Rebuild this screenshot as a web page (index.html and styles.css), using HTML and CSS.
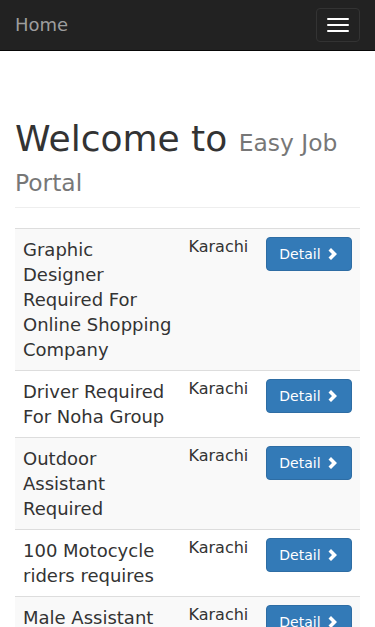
FILE: index.html
```html
<!DOCTYPE html>
<html lang="en">
<head>
    <meta charset="UTF-8">
    <meta name="viewport" content="width=device-width, initial-scale=1.0">
    <title>Easy Job Portal</title>
    <link rel="stylesheet" href="styles.css">
</head>
<body>
    <nav class="navbar">
        <a class="navbar-brand" href="#">Home</a>
        <button class="navbar-toggle" type="button">
            <span class="icon-bar"></span>
            <span class="icon-bar"></span>
            <span class="icon-bar"></span>
        </button>
    </nav>

    <div class="container">
        <div class="page-header">
            <h1>Welcome to <small>Easy Job Portal</small></h1>
        </div>

        <table class="jobs">
            <tbody>
                <tr>
                    <td class="title">Graphic Designer Required For Online Shopping Company</td>
                    <td class="city">Karachi</td>
                    <td><a class="btn" href="#">Detail <svg class="chevron" viewBox="0 0 14 14"><polygon points="3.5,3.5 6,1 12,7 6,13 3.5,10.5 7,7"/></svg></a></td>
                </tr>
                <tr>
                    <td class="title">Driver Required For Noha Group</td>
                    <td class="city">Karachi</td>
                    <td><a class="btn" href="#">Detail <svg class="chevron" viewBox="0 0 14 14"><polygon points="3.5,3.5 6,1 12,7 6,13 3.5,10.5 7,7"/></svg></a></td>
                </tr>
                <tr>
                    <td class="title">Outdoor Assistant Required</td>
                    <td class="city">Karachi</td>
                    <td><a class="btn" href="#">Detail <svg class="chevron" viewBox="0 0 14 14"><polygon points="3.5,3.5 6,1 12,7 6,13 3.5,10.5 7,7"/></svg></a></td>
                </tr>
                <tr>
                    <td class="title">100 Motocycle riders requires</td>
                    <td class="city">Karachi</td>
                    <td><a class="btn" href="#">Detail <svg class="chevron" viewBox="0 0 14 14"><polygon points="3.5,3.5 6,1 12,7 6,13 3.5,10.5 7,7"/></svg></a></td>
                </tr>
                <tr>
                    <td class="title">Male Assistant Required</td>
                    <td class="city">Karachi</td>
                    <td><a class="btn" href="#">Detail <svg class="chevron" viewBox="0 0 14 14"><polygon points="3.5,3.5 6,1 12,7 6,13 3.5,10.5 7,7"/></svg></a></td>
                </tr>
                <tr>
                    <td class="title">Sales Executive Required For Mobile Shop</td>
                    <td class="city">Karachi</td>
                    <td><a class="btn" href="#">Detail <svg class="chevron" viewBox="0 0 14 14"><polygon points="3.5,3.5 6,1 12,7 6,13 3.5,10.5 7,7"/></svg></a></td>
                </tr>
                <tr>
                    <td class="title">Office Boy Required</td>
                    <td class="city">Karachi</td>
                    <td><a class="btn" href="#">Detail <svg class="chevron" viewBox="0 0 14 14"><polygon points="3.5,3.5 6,1 12,7 6,13 3.5,10.5 7,7"/></svg></a></td>
                </tr>
                <tr>
                    <td class="title">Web Developer Required For Software House</td>
                    <td class="city">Karachi</td>
                    <td><a class="btn" href="#">Detail <svg class="chevron" viewBox="0 0 14 14"><polygon points="3.5,3.5 6,1 12,7 6,13 3.5,10.5 7,7"/></svg></a></td>
                </tr>
                <tr>
                    <td class="title">Female Receptionist Required</td>
                    <td class="city">Karachi</td>
                    <td><a class="btn" href="#">Detail <svg class="chevron" viewBox="0 0 14 14"><polygon points="3.5,3.5 6,1 12,7 6,13 3.5,10.5 7,7"/></svg></a></td>
                </tr>
                <tr>
                    <td class="title">Accountant Required For Textile Company</td>
                    <td class="city">Karachi</td>
                    <td><a class="btn" href="#">Detail <svg class="chevron" viewBox="0 0 14 14"><polygon points="3.5,3.5 6,1 12,7 6,13 3.5,10.5 7,7"/></svg></a></td>
                </tr>
                <tr>
                    <td class="title">Security Guards Required</td>
                    <td class="city">Karachi</td>
                    <td><a class="btn" href="#">Detail <svg class="chevron" viewBox="0 0 14 14"><polygon points="3.5,3.5 6,1 12,7 6,13 3.5,10.5 7,7"/></svg></a></td>
                </tr>
                <tr>
                    <td class="title">Delivery Boys Required</td>
                    <td class="city">Karachi</td>
                    <td><a class="btn" href="#">Detail <svg class="chevron" viewBox="0 0 14 14"><polygon points="3.5,3.5 6,1 12,7 6,13 3.5,10.5 7,7"/></svg></a></td>
                </tr>
                <tr>
                    <td class="title">Call Center Agents Required</td>
                    <td class="city">Karachi</td>
                    <td><a class="btn" href="#">Detail <svg class="chevron" viewBox="0 0 14 14"><polygon points="3.5,3.5 6,1 12,7 6,13 3.5,10.5 7,7"/></svg></a></td>
                </tr>
                <tr>
                    <td class="title">Cook Required For Restaurant</td>
                    <td class="city">Karachi</td>
                    <td><a class="btn" href="#">Detail <svg class="chevron" viewBox="0 0 14 14"><polygon points="3.5,3.5 6,1 12,7 6,13 3.5,10.5 7,7"/></svg></a></td>
                </tr>
                <tr>
                    <td class="title">Teacher Required For School</td>
                    <td class="city">Karachi</td>
                    <td><a class="btn" href="#">Detail <svg class="chevron" viewBox="0 0 14 14"><polygon points="3.5,3.5 6,1 12,7 6,13 3.5,10.5 7,7"/></svg></a></td>
                </tr>
                <tr>
                    <td class="title">Data Entry Operator Required</td>
                    <td class="city">Karachi</td>
                    <td><a class="btn" href="#">Detail <svg class="chevron" viewBox="0 0 14 14"><polygon points="3.5,3.5 6,1 12,7 6,13 3.5,10.5 7,7"/></svg></a></td>
                </tr>
                <tr>
                    <td class="title">Electrician Required</td>
                    <td class="city">Karachi</td>
                    <td><a class="btn" href="#">Detail <svg class="chevron" viewBox="0 0 14 14"><polygon points="3.5,3.5 6,1 12,7 6,13 3.5,10.5 7,7"/></svg></a></td>
                </tr>
                <tr>
                    <td class="title">Store Keeper Required For Warehouse</td>
                    <td class="city">Karachi</td>
                    <td><a class="btn" href="#">Detail <svg class="chevron" viewBox="0 0 14 14"><polygon points="3.5,3.5 6,1 12,7 6,13 3.5,10.5 7,7"/></svg></a></td>
                </tr>
                <tr>
                    <td class="title">Marketing Officer Required</td>
                    <td class="city">Karachi</td>
                    <td><a class="btn" href="#">Detail <svg class="chevron" viewBox="0 0 14 14"><polygon points="3.5,3.5 6,1 12,7 6,13 3.5,10.5 7,7"/></svg></a></td>
                </tr>
                <tr>
                    <td class="title">Helper Required For Factory</td>
                    <td class="city">Karachi</td>
                    <td><a class="btn" href="#">Detail <svg class="chevron" viewBox="0 0 14 14"><polygon points="3.5,3.5 6,1 12,7 6,13 3.5,10.5 7,7"/></svg></a></td>
                </tr>
            </tbody>
        </table>
    </div>
</body>
</html>
```

FILE: styles.css
```css
html {
  overflow-y: scroll;
}

body {
  margin: 0;
  padding-top: 79px;
  font-family: "DejaVu Sans", sans-serif;
  font-size: 14px;
  line-height: 1.42857;
  color: #333;
  background: #fff;
}

.navbar {
  position: fixed;
  top: 0;
  left: 0;
  right: 0;
  height: 50px;
  display: flex;
  justify-content: space-between;
  align-items: flex-start;
  background: #222;
  border-bottom: 1px solid #080808;
  z-index: 10;
}

.navbar-brand {
  padding: 15px;
  font-size: 18px;
  line-height: 20px;
  color: #9d9d9d;
  text-decoration: none;
}

.navbar-toggle {
  margin: 8px 15px 0 0;
  padding: 9px 10px;
  display: flex;
  flex-direction: column;
  gap: 4px;
  background: transparent;
  border: 1px solid #333;
  border-radius: 4px;
  cursor: pointer;
}

.icon-bar {
  display: block;
  width: 22px;
  height: 2px;
  border-radius: 1px;
  background: #fff;
}

.container {
  padding: 0 15px;
}

.page-header {
  margin: 40px 0 20px;
  padding-bottom: 9px;
  border-bottom: 1px solid #eee;
}

h1 {
  margin: 0;
  font-size: 36px;
  font-weight: normal;
  line-height: 1.1;
}

h1 small {
  font-size: 65%;
  line-height: 1;
  color: #777;
}

.jobs {
  width: 100%;
  margin-bottom: 20px;
  border-collapse: collapse;
}

.jobs td {
  padding: 8px;
  vertical-align: top;
  border-top: 1px solid #ddd;
}

.jobs tr:nth-child(odd) {
  background: #f9f9f9;
}

.jobs .title {
  font-size: 18px;
  line-height: 25px;
}

.jobs .city {
  padding-right: 10px;
  font-size: 16px;
  line-height: 20px;
}

.btn {
  display: inline-block;
  padding: 6px 12px;
  font-size: 14px;
  line-height: 20px;
  color: #fff;
  white-space: nowrap;
  text-decoration: none;
  background: #337ab7;
  border: 1px solid #2e6da4;
  border-radius: 4px;
}

.chevron {
  width: 14px;
  height: 14px;
  vertical-align: -2px;
  fill: #fff;
}
```
